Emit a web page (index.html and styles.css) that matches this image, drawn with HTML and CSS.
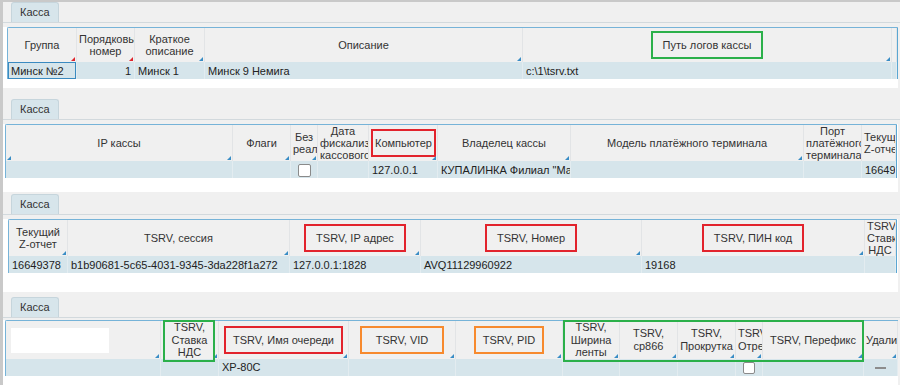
FILE: index.html
```html
<!DOCTYPE html>
<html lang="ru">
<head>
  <meta charset="UTF-8" />
  <title>Касса</title>
  <link rel="stylesheet" href="styles.css">
</head>
<body>
  <div class="screen">

    <section class="panel p1">
      <div class="tabs"><span class="tab">Касса</span></div>
      <div class="grid">
        <table class="t1">
          <colgroup><col><col><col><col><col><col></colgroup>
          <tr>
            <th class="red">Группа</th>
            <th class="red">Порядковый номер</th>
            <th>Краткое описание</th>
            <th>Описание</th>
            <th><span class="mark green">Путь логов кассы</span></th>
            <th class="nomark"></th>
          </tr>
          <tr>
            <td class="selected">Минск №2</td>
            <td class="num">1</td>
            <td>Минск 1</td>
            <td>Минск 9 Немига</td>
            <td>c:\1\tsrv.txt</td>
            <td></td>
          </tr>
        </table>
      </div>
    </section>

    <section class="panel p2">
      <div class="tabs"><span class="tab">Касса</span></div>
      <div class="grid">
        <table class="t2">
          <colgroup><col><col><col><col><col><col><col><col><col></colgroup>
          <tr>
            <th class="left-mark">IP кассы</th>
            <th>Флаги</th>
            <th>Без реализации</th>
            <th class="nomark">Дата фискализации кассового</th>
            <th><span class="mark red tight">Компьютер</span></th>
            <th>Владелец кассы</th>
            <th>Модель платёжного терминала</th>
            <th class="nomark">Порт платёжного терминала</th>
            <th class="nomark">Текущий <span class="nobr">Z-отчет</span></th>
          </tr>
          <tr>
            <td></td>
            <td></td>
            <td class="center"><span class="check"></span></td>
            <td></td>
            <td>127.0.0.1</td>
            <td>КУПАЛИНКА Филиал "Магазин"</td>
            <td></td>
            <td></td>
            <td>16649378</td>
          </tr>
        </table>
      </div>
    </section>

    <section class="panel p3">
      <div class="tabs"><span class="tab">Касса</span></div>
      <div class="grid">
        <table class="t3">
          <colgroup><col><col><col><col><col><col></colgroup>
          <tr>
            <th>Текущий <span class="nobr">Z-отчет</span></th>
            <th>TSRV, сессия</th>
            <th><span class="mark red">TSRV, IP адрес</span></th>
            <th><span class="mark red">TSRV, Номер</span></th>
            <th><span class="mark red">TSRV, ПИН код</span></th>
            <th class="nomark">TSRV, Ставка НДС</th>
          </tr>
          <tr>
            <td>16649378</td>
            <td>b1b90681-5c65-4031-9345-3da228f1a272</td>
            <td>127.0.0.1:1828</td>
            <td>AVQ11129960922</td>
            <td>19168</td>
            <td></td>
          </tr>
        </table>
      </div>
    </section>

    <section class="panel p4">
      <div class="tabs"><span class="tab">Касса</span></div>
      <div class="grid">
        <table class="t4">
          <colgroup><col><col><col><col><col><col><col><col><col><col><col></colgroup>
          <tr>
            <th class="field-cell"><span class="field"></span></th>
            <th>TSRV, Ставка НДС</th>
            <th><span class="mark red narrow">TSRV, Имя очереди</span></th>
            <th><span class="mark orange wide">TSRV, VID</span></th>
            <th><span class="mark orange narrow">TSRV, PID</span></th>
            <th>TSRV, Ширина ленты</th>
            <th>TSRV, ср866</th>
            <th>TSRV, Прокрутка</th>
            <th>TSRV, Отрезка</th>
            <th>TSRV, Перефикс</th>
            <th>Удалить</th>
          </tr>
          <tr>
            <td></td>
            <td></td>
            <td>XP-80C</td>
            <td></td>
            <td></td>
            <td></td>
            <td></td>
            <td></td>
            <td class="center"><span class="check small"></span></td>
            <td></td>
            <td class="center"><span class="dash"></span></td>
          </tr>
        </table>
        <div class="frame frame-vat"></div>
        <div class="frame frame-print"></div>
      </div>
    </section>

  </div>
</body>
</html>
```

FILE: styles.css
```css
* { box-sizing: border-box; }
body { margin: 0; background: #f0f0f0; font-family: "Liberation Sans", Arial, sans-serif; font-size: 11px; color: #333; }
.screen { width: 900px; height: 385px; overflow: hidden; border-top: 2px solid #c9c9c9; border-left: 3px solid #c9c9c9; }
.nobr { white-space: nowrap; }

/* tabs */
.panel { background: #f0f0f0; }
.tabs { height: 21px; padding-top: 1px; border-bottom: 1px solid #d2d9dd; display: flex; align-items: flex-end; }
.tab { height: 20px; margin-left: 8px; padding: 3px 8px 0; background: #d7e5eb; border: 1px solid #c6d5dc; border-bottom: none; border-radius: 3px 3px 0 0; color: #333; }

/* grid */
.grid { position: relative; background: #fff; margin-top: 4px; margin-right: 2px; }
table { border-collapse: separate; border-spacing: 0; table-layout: fixed; border-top: 1px solid #76b3d8; border-left: 1px solid #76b3d8; border-top-left-radius: 2px; }
th { background: #f0f0f0; font-weight: normal; color: #333; text-align: center; vertical-align: middle; padding: 0 2px; line-height: 12px; border-right: 1px solid #e2e4e6; overflow: hidden; position: relative; }
th::after { content: ""; position: absolute; right: 1px; bottom: 1px; border-style: solid; border-width: 0 0 4px 4px; border-color: transparent transparent #3a8dc5 transparent; }
th.red::after { border-bottom-color: #e0242c; }
th.nomark::after { display: none; }
th.left-mark::before { content: ""; position: absolute; left: 1px; bottom: 1px; border-style: solid; border-width: 0 0 4px 4px; border-color: transparent transparent #3a8dc5 transparent; }
td { height: 17px; background: #d6e5eb; color: #222; padding: 0 3px; white-space: nowrap; overflow: hidden; border-right: 1px solid #e3ecf0; }
td.num { text-align: right; }
td.center { text-align: center; padding: 0; }
td.selected { box-shadow: inset 0 0 0 1px #3a8ac0; }

.check { display: inline-block; width: 13px; height: 13px; margin-top: 2px; background: #fff; border: 1px solid #8a8a8a; border-radius: 2px; vertical-align: top; }
.check.small { width: 12px; height: 12px; margin-top: 1px; }
.dash { display: inline-block; width: 11px; height: 2px; background: #8c8c8c; vertical-align: middle; }

/* highlight frames */
.mark { display: inline-block; border: 2px solid; padding: 5px 10px; line-height: 14px; white-space: nowrap; }
.mark.green { border-color: #2bb04a; }
.mark.red { border-color: #e2232c; }
.mark.orange { border-color: #f78a2e; }
.mark.tight { padding: 5px 2px; }
.mark.narrow { padding: 5px 7px; }
.mark.wide { padding: 5px 14px; }
.frame { position: absolute; top: 0; height: 42px; border: 2px solid #2bb04a; }
.frame-vat { left: 160px; width: 52px; }
.frame-print { left: 560px; width: 301px; }

/* panel 1 */
.p1 .grid { padding: 0 0 9px 4px; }
.p1 table { width: 891px; border-right: 1px solid #5aa6d2; }
.p1 th { height: 34px; }
.t1 col:nth-child(1) { width: 69px; }
.t1 col:nth-child(2) { width: 58px; }
.t1 col:nth-child(3) { width: 70px; }
.t1 col:nth-child(4) { width: 318px; }
.t1 col:nth-child(5) { width: 369px; }
.t1 col:nth-child(6) { width: 5px; }

/* panel 2 */
.p2 { padding-top: 11px; }
.p2 .grid { padding: 0 0 14px 2px; }
.p2 table { width: 892px; border-right: 1px solid #5aa6d2; }
.p2 th { height: 34px; }
.t2 col:nth-child(1) { width: 227px; }
.t2 col:nth-child(2) { width: 58px; }
.t2 col:nth-child(3) { width: 27px; }
.t2 col:nth-child(4) { width: 51px; }
.t2 col:nth-child(5) { width: 69px; }
.t2 col:nth-child(6) { width: 133px; }
.t2 col:nth-child(7) { width: 233px; }
.t2 col:nth-child(8) { width: 58px; }
.t2 col:nth-child(9) { width: 34px; }

/* panel 3 */
.p3 { padding-top: 2px; }
.p3 .grid { padding: 0 0 19px 5px; }
.p3 table { width: 889px; border-right: 1px solid #5aa6d2; }
.p3 th { height: 35px; }
.t3 col:nth-child(1) { width: 59px; }
.t3 col:nth-child(2) { width: 222px; }
.t3 col:nth-child(3) { width: 131px; }
.t3 col:nth-child(4) { width: 221px; }
.t3 col:nth-child(5) { width: 223px; }
.t3 col:nth-child(6) { width: 31px; }

/* panel 4 */
.p4 { padding-top: 5px; }
.p4 .grid { margin-top: 2px; padding: 0 0 11px 2px; border-bottom: 2px solid #cfcfcf; }
.p4 table { width: 893px; }
.p4 th { height: 37px; line-height: 12.5px; }
.field-cell { text-align: left; }
.field { display: block; width: 98px; height: 25px; margin-left: 3px; margin-top: 2px; background: #fff; }
.t4 col:nth-child(1) { width: 155px; }
.t4 col:nth-child(2) { width: 58px; }
.t4 col:nth-child(3) { width: 130px; }
.t4 col:nth-child(4) { width: 107px; }
.t4 col:nth-child(5) { width: 107px; }
.t4 col:nth-child(6) { width: 57px; }
.t4 col:nth-child(7) { width: 58px; }
.t4 col:nth-child(8) { width: 58px; }
.t4 col:nth-child(9) { width: 27px; }
.t4 col:nth-child(10) { width: 101px; }
.t4 col:nth-child(11) { width: 34px; }
```
